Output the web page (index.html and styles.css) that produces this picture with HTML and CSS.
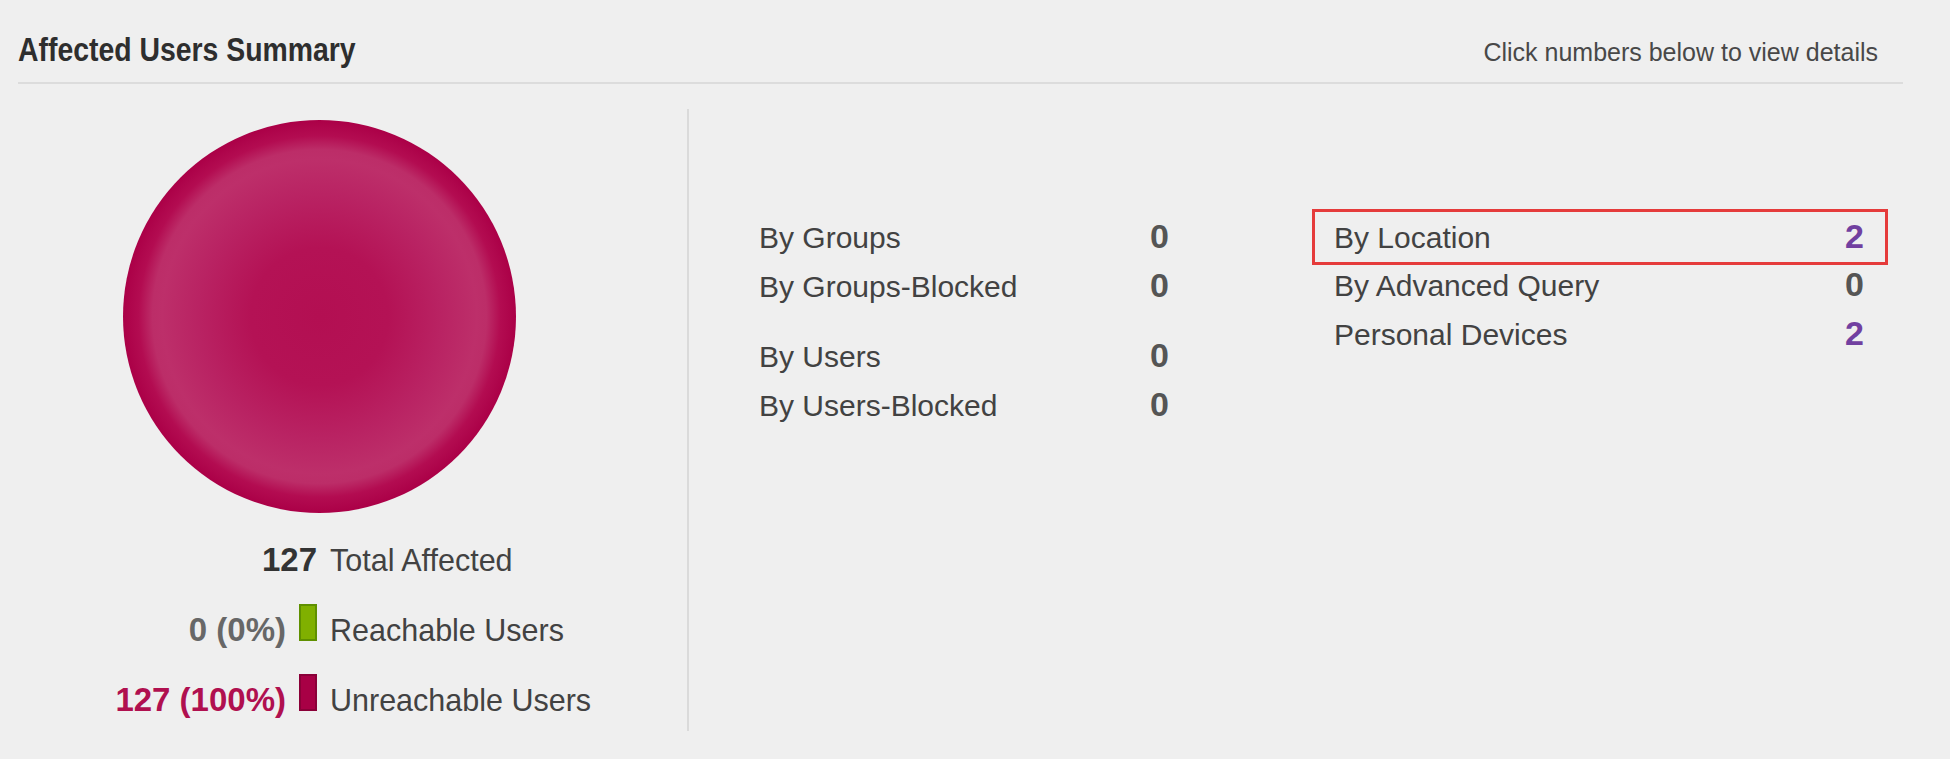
FILE: index.html
```html
<!DOCTYPE html>
<html lang="en">
<head>
<meta charset="utf-8">
<title>Affected Users Summary</title>
<link rel="stylesheet" href="styles.css">
</head>
<body>
<div class="page">
  <header class="head">
    <h1 class="title">Affected Users Summary</h1>
    <span class="hint">Click numbers below to view details</span>
  </header>
  <div class="body">
    <div class="left">
      <div class="pie"></div>
      <div class="legend">
        <span class="num total">127</span><span class="lab">Total Affected</span>
        <span class="num gray">0 (0%)</span><span class="swcell"><i class="sw green"></i></span><span class="lab">Reachable Users</span>
        <span class="num red">127 (100%)</span><span class="swcell"><i class="sw crimson"></i></span><span class="lab">Unreachable Users</span>
      </div>
    </div>
    <div class="divider"></div>
    <div class="stats">
      <div class="col mid">
        <div class="row"><span class="lab">By Groups</span><span class="val">0</span></div>
        <div class="row"><span class="lab">By Groups-Blocked</span><span class="val">0</span></div>
        <div class="row gap"><span class="lab">By Users</span><span class="val">0</span></div>
        <div class="row"><span class="lab">By Users-Blocked</span><span class="val">0</span></div>
      </div>
      <div class="col right">
        <div class="row boxed"><span class="lab">By Location</span><span class="val link">2</span></div>
        <div class="row"><span class="lab">By Advanced Query</span><span class="val">0</span></div>
        <div class="row"><span class="lab">Personal Devices</span><span class="val link">2</span></div>
      </div>
    </div>
  </div>
</div>
</body>
</html>
```

FILE: styles.css
```css
html, body {
  margin: 0;
  padding: 0;
  background: #efefef;
}
body {
  font-family: "Liberation Sans", Arial, sans-serif;
  color: #424242;
}
.page {
  padding: 0 47px 0 18px;
  width: 1950px;
  height: 759px;
  box-sizing: border-box;
  overflow: hidden;
}
.head {
  display: flex;
  justify-content: space-between;
  align-items: baseline;
  padding: 29px 25px 13px 0;
  border-bottom: 2px solid #dcdcdc;
}
.title {
  margin: 0;
  font-weight: 700;
  font-size: 34px;
  line-height: 40px;
  color: #2e2e2e;
  white-space: nowrap;
  transform: scaleX(0.835);
  transform-origin: left center;
}
.hint {
  font-size: 25px;
  color: #484848;
}
.body {
  display: flex;
  align-items: flex-start;
}
.left {
  width: 669px;
  padding-top: 36px;
}
.pie {
  width: 393px;
  height: 393px;
  margin-left: 105px;
  border-radius: 50%;
  background: radial-gradient(circle closest-side, #b30f52 0%, #b41255 35%, #b92363 62%, #bd2f6a 80%, #bc2d68 85%, #b30c51 92%, #ab0047 100%);
}
.legend {
  margin-top: 12px;
  display: grid;
  grid-template-columns: 268px 18px auto;
  column-gap: 13px;
  align-items: baseline;
  font-size: 30.5px;
  line-height: 69px;
}
.legend .num {
  text-align: right;
  font-weight: 700;
  font-size: 33px;
}
.legend .total {
  grid-column: 1 / 3;
  color: #333;
}
.legend .gray { color: #676767; }
.legend .red { color: #b0104f; }
.swcell { line-height: 69px; }
.sw {
  display: inline-block;
  width: 18px;
  height: 37px;
  box-sizing: border-box;
  vertical-align: baseline;
}
.sw.green {
  background: #80b000;
  border: 2px solid #5f9000;
}
.sw.crimson {
  background: #a80045;
  border: 2px solid #8a0038;
}
.divider {
  width: 2px;
  height: 622px;
  margin-top: 25px;
  background: #dadada;
}
.stats {
  display: flex;
  align-items: flex-start;
  padding-left: 70px;
}
.col .row {
  display: flex;
  justify-content: space-between;
  align-items: baseline;
  height: 49px;
  font-size: 30px;
  line-height: 49px;
}
.col .val {
  font-weight: 700;
  font-size: 34px;
  color: #555;
}
.col .val.link { color: #7140a0; }
.mid {
  width: 410px;
  margin-top: 128px;
}
.mid .row.gap { margin-top: 21px; }
.right {
  width: 576px;
  margin-left: 143px;
  margin-top: 125px;
}
.right .row {
  padding: 0 24px 0 22px;
}
.right .row.boxed {
  box-sizing: border-box;
  height: 56px;
  border: 3px solid #e53b3b;
  padding: 0 21px 0 19px;
  margin-bottom: -5px;
}
```
